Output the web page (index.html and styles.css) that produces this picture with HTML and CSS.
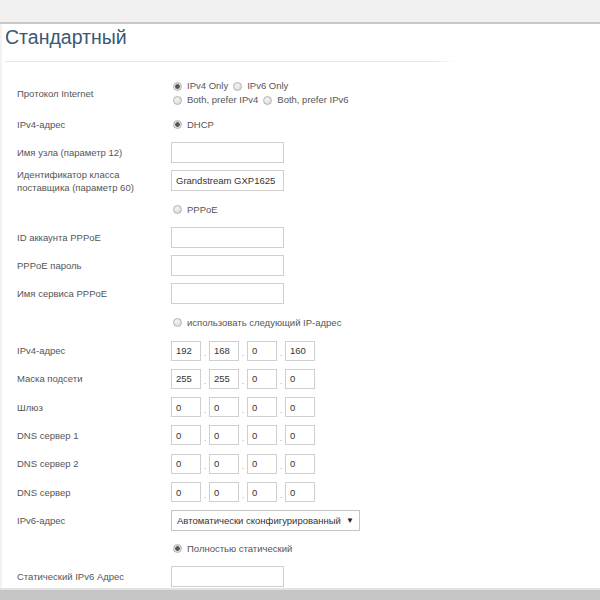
FILE: index.html
```html
<!DOCTYPE html>
<html lang="ru">
<head>
<meta charset="utf-8">
<title>Стандартный</title>
<link rel="stylesheet" href="styles.css">
</head>
<body>
<div class="topbar"></div>
<main class="page">
  <h1 class="title">Стандартный</h1>
  <div class="rule"></div>
  <div class="form">
    <div class="row row-tall">
      <div class="label">Протокол Internet</div>
      <div class="ctrl ctrl-stack">
        <div class="radios">
          <label class="radio"><input type="radio" name="proto" checked><span>IPv4 Only</span></label>
          <label class="radio"><input type="radio" name="proto"><span>IPv6 Only</span></label>
        </div>
        <div class="radios">
          <label class="radio"><input type="radio" name="proto"><span>Both, prefer IPv4</span></label>
          <label class="radio"><input type="radio" name="proto"><span>Both, prefer IPv6</span></label>
        </div>
      </div>
    </div>
    <div class="row">
      <div class="label">IPv4-адрес</div>
      <div class="ctrl"><label class="radio"><input type="radio" name="v4" checked><span>DHCP</span></label></div>
    </div>
    <div class="row">
      <div class="label">Имя узла (параметр 12)</div>
      <div class="ctrl"><input class="text" type="text" value=""></div>
    </div>
    <div class="row">
      <div class="label">Идентификатор класса<br>поставщика (параметр 60)</div>
      <div class="ctrl"><input class="text" type="text" value="Grandstream GXP1625"></div>
    </div>
    <div class="row">
      <div class="label"></div>
      <div class="ctrl"><label class="radio"><input type="radio" name="v4"><span>PPPoE</span></label></div>
    </div>
    <div class="row">
      <div class="label">ID аккаунта PPPoE</div>
      <div class="ctrl"><input class="text" type="text" value=""></div>
    </div>
    <div class="row">
      <div class="label">PPPoE пароль</div>
      <div class="ctrl"><input class="text" type="text" value=""></div>
    </div>
    <div class="row">
      <div class="label">Имя сервиса PPPoE</div>
      <div class="ctrl"><input class="text" type="text" value=""></div>
    </div>
    <div class="row">
      <div class="label"></div>
      <div class="ctrl"><label class="radio"><input type="radio" name="v4"><span>использовать следующий IP-адрес</span></label></div>
    </div>
    <div class="row">
      <div class="label">IPv4-адрес</div>
      <div class="ctrl ip"><input class="oct" value="192"><span class="dot">.</span><input class="oct" value="168"><span class="dot">.</span><input class="oct" value="0"><span class="dot">.</span><input class="oct" value="160"></div>
    </div>
    <div class="row">
      <div class="label">Маска подсети</div>
      <div class="ctrl ip"><input class="oct" value="255"><span class="dot">.</span><input class="oct" value="255"><span class="dot">.</span><input class="oct" value="0"><span class="dot">.</span><input class="oct" value="0"></div>
    </div>
    <div class="row">
      <div class="label">Шлюз</div>
      <div class="ctrl ip"><input class="oct" value="0"><span class="dot">.</span><input class="oct" value="0"><span class="dot">.</span><input class="oct" value="0"><span class="dot">.</span><input class="oct" value="0"></div>
    </div>
    <div class="row">
      <div class="label">DNS сервер 1</div>
      <div class="ctrl ip"><input class="oct" value="0"><span class="dot">.</span><input class="oct" value="0"><span class="dot">.</span><input class="oct" value="0"><span class="dot">.</span><input class="oct" value="0"></div>
    </div>
    <div class="row">
      <div class="label">DNS сервер 2</div>
      <div class="ctrl ip"><input class="oct" value="0"><span class="dot">.</span><input class="oct" value="0"><span class="dot">.</span><input class="oct" value="0"><span class="dot">.</span><input class="oct" value="0"></div>
    </div>
    <div class="row">
      <div class="label">DNS сервер</div>
      <div class="ctrl ip"><input class="oct" value="0"><span class="dot">.</span><input class="oct" value="0"><span class="dot">.</span><input class="oct" value="0"><span class="dot">.</span><input class="oct" value="0"></div>
    </div>
    <div class="row">
      <div class="label">IPv6-адрес</div>
      <div class="ctrl"><div class="select"><span>Автоматически сконфигурированный</span><span class="arrow">▼</span></div></div>
    </div>
    <div class="row">
      <div class="label"></div>
      <div class="ctrl"><label class="radio"><input type="radio" name="v6" checked><span>Полностью статический</span></label></div>
    </div>
    <div class="row">
      <div class="label">Статический IPv6 Адрес</div>
      <div class="ctrl"><input class="text" type="text" value=""></div>
    </div>
  </div>
</main>
<div class="bottombar"></div>
</body>
</html>
```
FILE: styles.css
```css
html, body {
  margin: 0;
  padding: 0;
  background: #fff;
  font-family: "Liberation Sans", Arial, sans-serif;
  overflow: hidden;
}
.topbar {
  height: 22px;
  background: #f0f0f0;
  border-bottom: 2px solid #c9c9c9;
}
.page {
  border-left: 2px solid #f2f2f2;
  padding-left: 3px;
}
.title {
  margin: 0;
  font-size: 19.5px;
  line-height: 26px;
  font-weight: normal;
  color: #3a5876;
}
.rule {
  margin-top: 11px;
  width: 450px;
  height: 1px;
  background: linear-gradient(to right, #e6e6e6 0%, #e6e6e6 95%, #fff 100%);
}
.form {
  padding-top: 14px;
  padding-left: 12px;
}
.row {
  display: flex;
  align-items: center;
  height: 28.3px;
}
.row-tall {
  height: 34px;
}
.label {
  width: 154px;
  flex: none;
  font-size: 9.5px;
  line-height: 13px;
  color: #555;
}
.ctrl {
  display: flex;
  align-items: center;
  font-size: 9.5px;
  color: #555;
  white-space: nowrap;
}
.ctrl-stack {
  flex-direction: column;
  align-items: flex-start;
}
.radios {
  display: flex;
  gap: 3px;
  line-height: 14px;
}
.radio {
  display: flex;
  align-items: center;
  gap: 5px;
  margin-left: 2px;
}
.radio input {
  -webkit-appearance: none;
  appearance: none;
  margin: 0;
  width: 9px;
  height: 9px;
  border-radius: 50%;
  border: 1px solid #b4b4b4;
  background: radial-gradient(circle at 40% 35%, #f4f4f4 0%, #d6d6d6 100%);
  box-sizing: border-box;
}
.radio input:checked {
  background: radial-gradient(circle, #555 0, #555 2px, #dcdcdc 2.5px, #e4e4e4 100%);
}
.text {
  box-sizing: border-box;
  width: 113px;
  height: 21px;
  margin: 0;
  border: 1px solid #cfcfcf;
  padding: 0 4px;
  font-family: "Liberation Sans", Arial, sans-serif;
  font-size: 9.5px;
  color: #333;
  background: #fff;
  outline: none;
}
.ip {
  gap: 0;
}
.oct {
  box-sizing: border-box;
  width: 30px;
  height: 20px;
  margin: 0;
  border: 1px solid #cfcfcf;
  padding: 0 4px;
  font-family: "Liberation Sans", Arial, sans-serif;
  font-size: 9.5px;
  color: #333;
  background: #fff;
  outline: none;
}
.dot {
  width: 8px;
  text-align: center;
  color: #aaa;
  font-size: 9.5px;
  padding-top: 4px;
}
.select {
  box-sizing: border-box;
  width: 189px;
  height: 21px;
  border: 1px solid #c4c4c4;
  display: flex;
  align-items: center;
  justify-content: space-between;
  padding: 0 5px 0 5px;
  font-size: 9.5px;
  color: #333;
  background: #fff;
  white-space: nowrap;
}
.arrow {
  font-size: 8px;
  color: #222;
}
.bottombar {
  position: fixed;
  left: 0;
  right: 0;
  bottom: 0;
  height: 10px;
  background: #c6c6c6;
  border-top: 2px solid #e2e2e2;
}
```
